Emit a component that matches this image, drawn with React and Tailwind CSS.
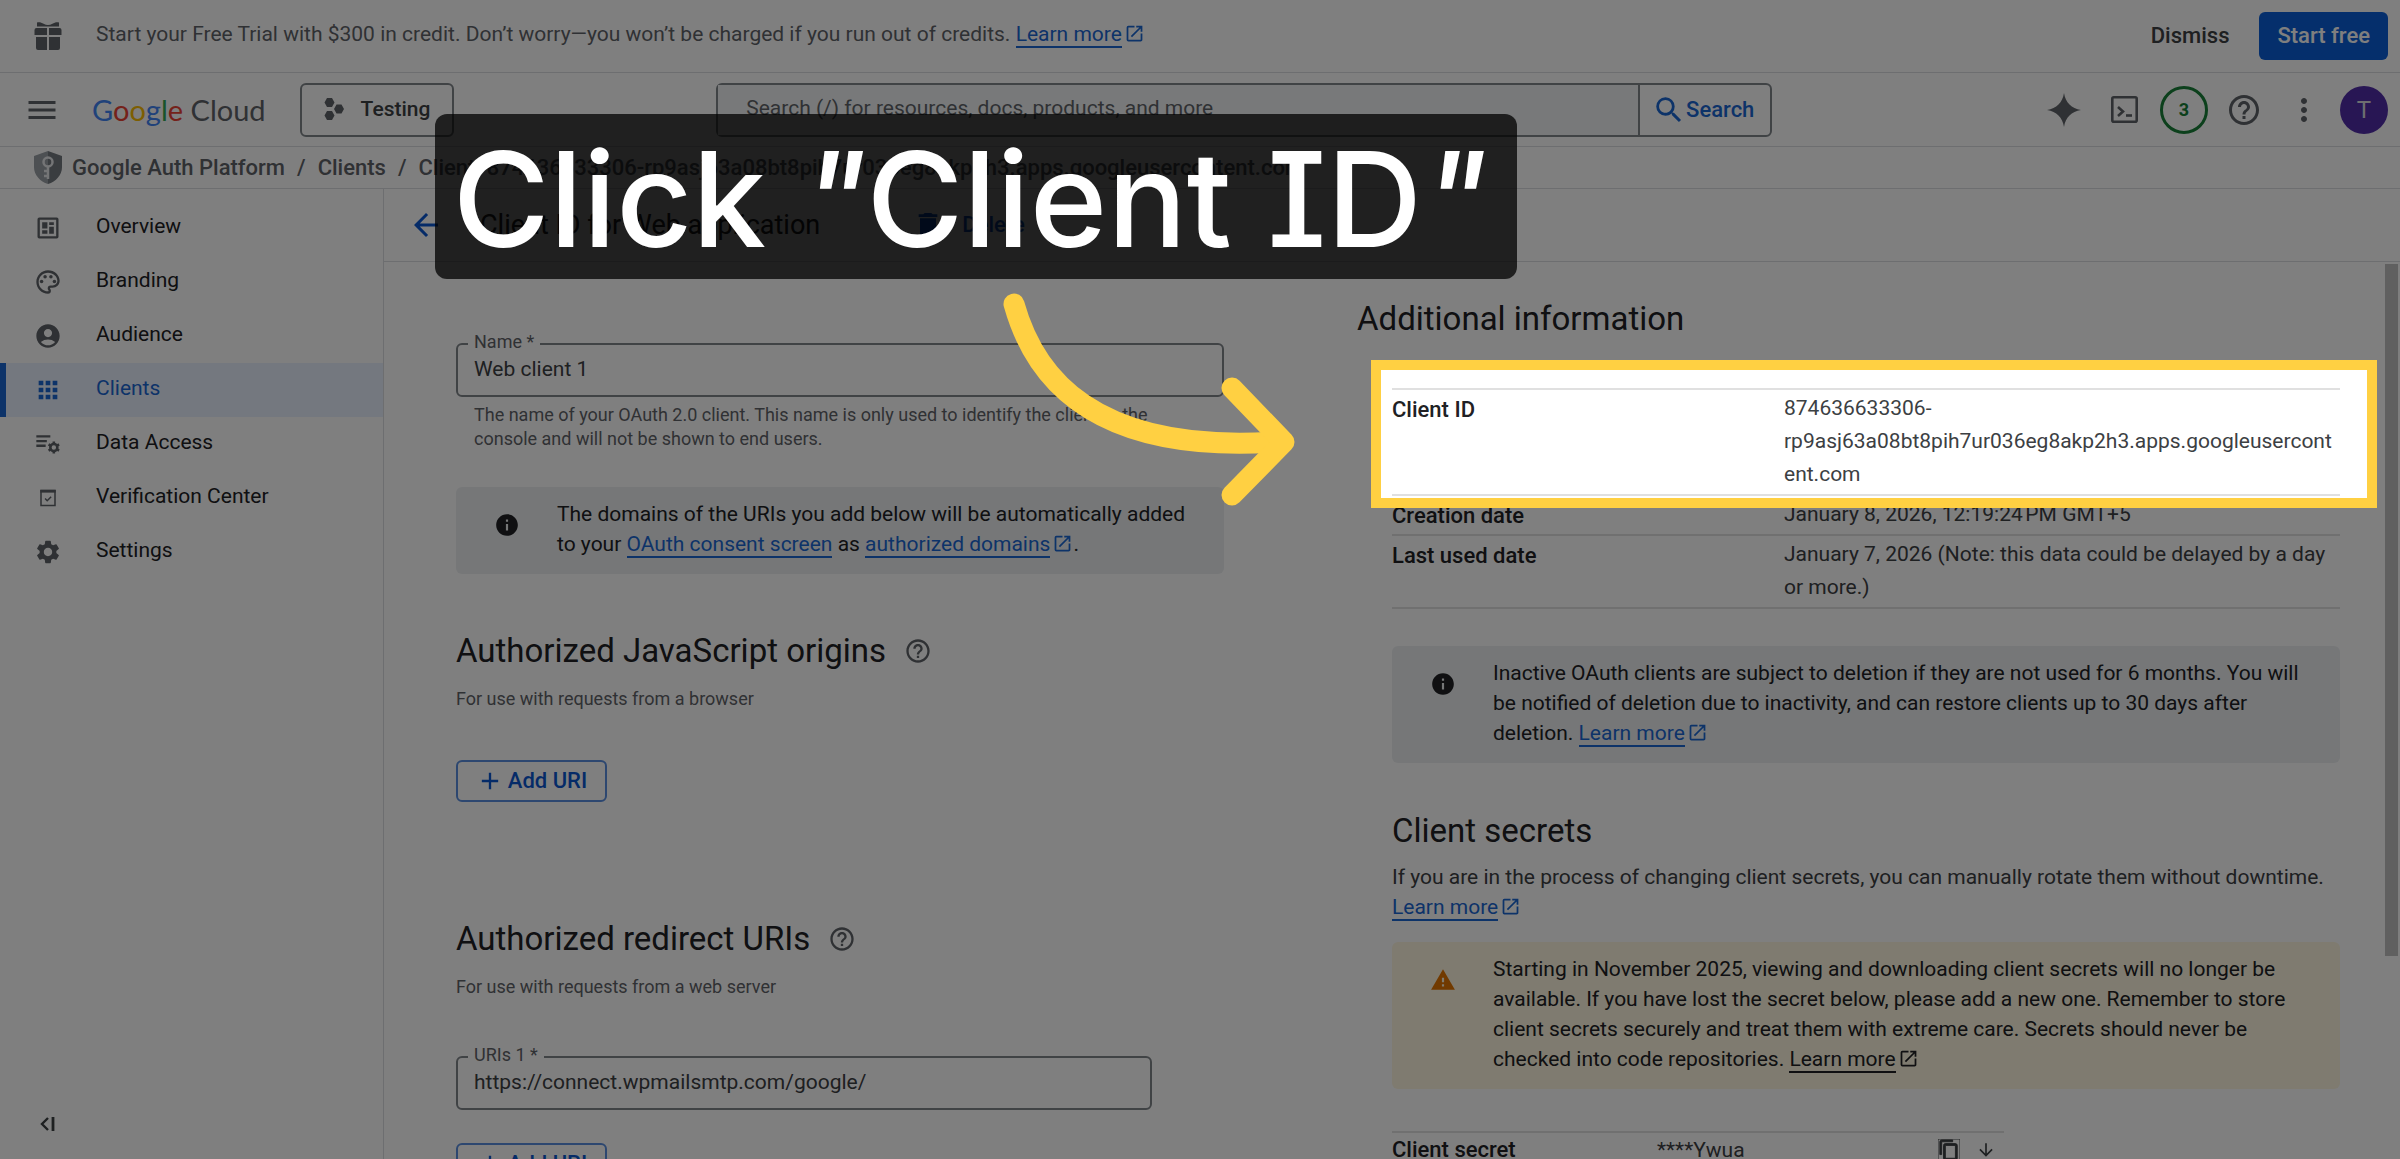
import {
  MdAccountCircle,
  MdAdd,
  MdApps,
  MdArrowBack,
  MdArrowDownward,
  MdContentCopy,
  MdDelete,
  MdHelpOutline,
  MdInfo,
  MdMenu,
  MdMoreVert,
  MdOpenInNew,
  MdOutlinePalette,
  MdSearch,
  MdSettings,
  MdWarning,
} from 'react-icons/md';

/* Icons that the Material set does not have */

function GiftIcon({ className }) {
  return (
    <svg viewBox="0 0 28 28" className={className} fill="currentColor" aria-hidden="true">
      <path d="M3 0.5c2-.8 4.600 0 6.600 1.200a9 9 0 0 0 8.800 0C20.400.5 23 -.3 25 .5v4H3z" />
      <path d="M2.500 6h10.500v7H0.500V8a2 2 0 0 1 2-2zM15 6h10.500a2 2 0 0 1 2 2v5H15zM2 15h11v13H4a2 2 0 0 1-2-2zM15 15h11v11a2 2 0 0 1-2 2h-9z" />
    </svg>
  );
}

function ProjectIcon({ className }) {
  return (
    <svg viewBox="0 0 20 22" className={className} fill="currentColor" aria-hidden="true">
      <path d="M3 0h5l2.500 4.500L8 9H3L.5 4.500zM3 13h5l2.500 4.500L8 22H3L.5 17.500zM12.500 6.500h5L20 11l-2.500 4.500h-5L10 11z" />
    </svg>
  );
}

function ShieldIcon({ className }) {
  return (
    <svg viewBox="0 0 28 33" className={className} aria-hidden="true">
      <path d="M14 0 0 5v11c0 8 6 14.500 14 17z" fill="#9aa0a6" />
      <path d="M14 0l14 5v11c0 8-6 14.500-14 17z" fill="#757a80" />
      <circle cx="14" cy="11" r="4.500" fill="none" stroke="#e8eaed" strokeWidth="2.500" />
      <path d="M14 15v13M14 20h-4M14 25h-4" stroke="#e8eaed" strokeWidth="2.500" fill="none" />
    </svg>
  );
}

function OverviewIcon({ className }) {
  return (
    <svg viewBox="0 0 24 24" className={className} fill="currentColor" aria-hidden="true">
      <path
        fillRule="evenodd"
        d="M4.500 3h15A1.500 1.500 0 0 1 21 4.500v15a1.500 1.500 0 0 1-1.500 1.500h-15A1.500 1.500 0 0 1 3 19.500v-15A1.500 1.500 0 0 1 4.500 3zM5 5v14h14V5z"
      />
      <path d="M7 7h4.500v5.500H7zM13 7h4v2.500h-4zM13 11h4v6h-4zM7 14h4.500v3H7z" />
    </svg>
  );
}

function DataAccessIcon({ className }) {
  return (
    <svg viewBox="0 0 24 24" className={className} fill="currentColor" aria-hidden="true">
      <path d="M2 4.500h12v2H2zM2 8.500h9v2H2zM2 12.500h8v2H2z" />
      <circle cx="17" cy="15" r="3" fill="none" stroke="currentColor" strokeWidth="2.200" />
      <path
        d="M17 9.800v2M17 18.200v2M12.500 12.400l1.700 1M19.800 16.600l1.700 1M12.500 17.600l1.700-1M19.800 13.400l1.700-1"
        stroke="currentColor"
        strokeWidth="2.200"
      />
    </svg>
  );
}

function VerificationIcon({ className }) {
  return (
    <svg viewBox="0 0 24 24" className={className} fill="none" stroke="currentColor" aria-hidden="true">
      <path d="M6 5.500h12v13H6z" strokeWidth="1.300" />
      <path d="M5.400 6.200h13.200" strokeWidth="2.400" />
      <path d="M9.500 12.500l1.800 1.800 3.400-3.400" strokeWidth="1.300" />
    </svg>
  );
}

function SparkIcon({ className }) {
  return (
    <svg viewBox="0 0 34 34" className={className} fill="currentColor" aria-hidden="true">
      <path d="M17 0c1.500 9.500 7.500 15.500 17 17-9.500 1.500-15.500 7.500-17 17C15.500 24.500 9.500 18.500 0 17 9.500 15.500 15.500 9.500 17 0z" />
    </svg>
  );
}

function ShellIcon({ className }) {
  return (
    <svg viewBox="0 0 27 27" className={className} fill="none" stroke="currentColor" aria-hidden="true">
      <rect x="1.300" y="1.300" width="24.400" height="24.400" rx="1.500" strokeWidth="2.600" />
      <path d="M7 11l5 4.500-5 4.500" strokeWidth="2.600" />
      <path d="M15 19.500h6" strokeWidth="2.600" />
    </svg>
  );
}

function CollapseIcon({ className }) {
  return (
    <svg viewBox="0 0 15 14" className={className} fill="none" stroke="currentColor" strokeWidth="2.400" aria-hidden="true">
      <path d="M8 1 2 7l6 6" />
      <path d="M13 0v14" strokeWidth="2.800" />
    </svg>
  );
}

const navItems = [
  { label: 'Overview', icon: OverviewIcon },
  { label: 'Branding', icon: MdOutlinePalette },
  { label: 'Audience', icon: MdAccountCircle },
  { label: 'Clients', icon: MdApps, active: true },
  { label: 'Data Access', icon: DataAccessIcon },
  { label: 'Verification Center', icon: VerificationIcon },
  { label: 'Settings', icon: MdSettings },
];

const clientInfo = [
  { label: 'Client ID', value: '874636633306-rp9asj63a08bt8pih7ur036eg8akp2h3.apps.googleusercontent.com' },
  { label: 'Creation date', value: 'January 8, 2026, 12:19:24\u202fPM GMT+5' },
  { label: 'Last used date', value: 'January 7, 2026 (Note: this data could be delayed by a day or more.)' },
];

function TextLink({ children, external, className = 'text-[#1a67d2]' }) {
  return (
    <a href="#" className={`whitespace-nowrap ${className}`}>
      <span className="border-b-2 border-current">{children}</span>
      {external && <MdOpenInNew className="ml-0.5 inline size-[21px] align-[-3px]" />}
    </a>
  );
}

function TopBanner() {
  return (
    <div className="flex h-[73px] shrink-0 items-center border-b border-[#dadce0] pl-[34px] pr-3">
      <GiftIcon className="size-7 text-[#5f6368]" />
      <p className="ml-[34px] flex-1 pb-1 text-[#5f6368]">
        Start your Free Trial with $300 in credit. Don’t worry—you won’t be charged if you run out of credits.{' '}
        <TextLink external>Learn more</TextLink>
      </p>
      <button className="px-[30px] text-[22px] font-medium text-[#3c4043]">Dismiss</button>
      <button className="h-12 rounded-md bg-[#0b5fd8] px-[18px] text-[22px] font-medium text-white">Start free</button>
    </div>
  );
}

function GoogleCloudLogo() {
  return (
    <a href="#" className="ml-8 font-['Lato'] text-[29px] text-[#5f6368]" aria-label="Google Cloud">
      <span className="text-[#4285f4]">G</span>
      <span className="text-[#ea4335]">o</span>
      <span className="text-[#fbbc04]">o</span>
      <span className="text-[#4285f4]">g</span>
      <span className="text-[#34a853]">l</span>
      <span className="text-[#ea4335]">e</span> Cloud
    </a>
  );
}

function Header() {
  return (
    <header className="flex h-[74px] shrink-0 items-center justify-between border-b border-[#dadce0] pl-6 pr-[6px]">
      <div className="flex items-center">
        <button aria-label="Main menu" className="text-[#5f6368]">
          <MdMenu className="size-9" />
        </button>
        <GoogleCloudLogo />
        <button className="ml-[34px] flex h-[54px] items-center gap-[17px] rounded-md border-2 border-[#80868b] px-[22px] pb-0.5 font-medium text-[#3c4043]">
          <ProjectIcon className="h-[22px] w-5 text-[#5f6368]" />
          Testing
        </button>
      </div>
      <form className="flex h-[54px] w-[1056px] rounded-md border-2 border-[#80868b]">
        <input
          type="search"
          aria-label="Search"
          placeholder="Search (/) for resources, docs, products, and more"
          className="min-w-0 flex-1 bg-[#f1f3f4] px-7 pb-1 placeholder-[#5f6368]"
        />
        <button type="button" className="flex w-[132px] items-center justify-center border-l-2 border-[#80868b] pr-1 text-[22px] font-medium text-[#1a67d2]">
          <MdSearch className="size-[34px]" />
          Search
        </button>
      </form>
      <div className="flex items-center text-[#5f6368]">
        <button aria-label="Gemini" className="flex w-[60px] justify-center">
          <SparkIcon className="size-[34px]" />
        </button>
        <button aria-label="Cloud Shell" className="flex w-[60px] justify-center">
          <ShellIcon className="size-[27px]" />
        </button>
        <button aria-label="Notifications" className="flex w-[60px] justify-center">
          <span className="flex size-12 items-center justify-center rounded-full border-[3px] border-[#188038] text-lg font-bold text-[#188038]">3</span>
        </button>
        <button aria-label="Help" className="flex w-[60px] justify-center">
          <MdHelpOutline className="size-9" />
        </button>
        <button aria-label="More options" className="flex w-[60px] justify-center">
          <MdMoreVert className="size-9" />
        </button>
        <button aria-label="Account" className="flex w-[60px] justify-center">
          <span className="flex size-12 items-center justify-center rounded-full bg-[#512da8] text-2xl text-[#dadce0]">T</span>
        </button>
      </div>
    </header>
  );
}

function Breadcrumbs() {
  return (
    <nav aria-label="Breadcrumb" className="flex h-[42px] shrink-0 items-center border-b border-[#dadce0] pl-[34px] text-[22px] font-medium text-[#5f6368]">
      <ShieldIcon className="mr-[10px] h-[33px] w-7" />
      <a href="#">Google Auth Platform</a>
      <span className="mx-3">/</span>
      <a href="#">Clients</a>
      <span className="mx-3">/</span>
      <span>Client: 874636633306-rp9asj63a08bt8pih7ur036eg8akp2h3.apps.googleusercontent.com</span>
    </nav>
  );
}

function Sidebar() {
  return (
    <aside className="flex w-[384px] shrink-0 flex-col justify-between border-r border-[#dadce0] pt-3 pb-7">
      <nav aria-label="Google Auth Platform">
        {navItems.map(({ label, icon: Icon, active }) => (
          <a
            key={label}
            href="#"
            className={`flex h-[54px] items-center gap-[34px] border-l-[6px] pl-7 ${
              active ? 'border-[#1a67d2] bg-[#e8f0fe] text-[#1a67d2]' : 'border-transparent text-[#202124]'
            }`}
          >
            <Icon className={`size-7 ${active ? '' : 'text-[#5f6368]'}`} />
            <span className="pb-1">{label}</span>
          </a>
        ))}
      </nav>
      <button aria-label="Collapse menu" className="ml-10 w-[15px] text-[#3c4043]">
        <CollapseIcon className="h-[14px] w-[15px]" />
      </button>
    </aside>
  );
}

function PageTitle() {
  return (
    <div className="flex h-[73px] items-center border-b border-[#dadce0] pl-6">
      <button aria-label="Back" className="text-[#0b57d0]">
        <MdArrowBack className="size-9" />
      </button>
      <h1 className="ml-9 text-[27px] text-[#202124]">Client ID for Web application</h1>
      <button className="ml-[92px] flex items-center gap-[18px] text-[22px] font-medium text-[#0b57d0]">
        <MdDelete className="size-8" />
        Delete
      </button>
    </div>
  );
}

function TextField({ id, label, value, className = '' }) {
  return (
    <div className={`relative ${className}`}>
      <label htmlFor={id} className="absolute -top-[13px] left-3 bg-white px-[6px] text-lg leading-6 text-[#5f6368]">
        {label}
      </label>
      <input id={id} defaultValue={value} className="h-[54px] w-full rounded-md border-2 border-[#80868b] px-4 pb-[3px] text-[#3c4043]" />
    </div>
  );
}

function Notice({ warning, className = '', children }) {
  return (
    <div className={`flex rounded-md pt-3 pb-[15px] pl-[38px] pr-6 text-[#202124] ${warning ? 'bg-[#fef7e0]' : 'bg-[#eceff1]'} ${className}`}>
      {warning ? (
        <MdWarning className="mt-[13px] mr-[37px] size-[26px] shrink-0 text-[#e37400]" />
      ) : (
        <MdInfo className="mt-[13px] mr-[37px] size-[26px] shrink-0" />
      )}
      <p>{children}</p>
    </div>
  );
}

function SectionTitle({ children, help }) {
  return (
    <h2 className="flex items-center gap-[18px] text-[33px] leading-[48px] text-[#202124]">
      {children}
      {help && <MdHelpOutline className="size-7 text-[#5f6368]" />}
    </h2>
  );
}

function AddUriButton({ className = '' }) {
  return (
    <button className={`flex h-[42px] w-[151px] items-center justify-center gap-1 rounded-md border-2 border-[#5a8fe0] text-[22px] font-medium text-[#0b57d0] ${className}`}>
      <MdAdd className="size-7" />
      Add URI
    </button>
  );
}

function ClientForm() {
  return (
    <section className="max-w-[768px] pt-[81px]">
      <TextField id="name" label="Name *" value="Web client 1" />
      <p className="mt-[6px] px-[18px] text-lg leading-6 text-[#5f6368]">
        The name of your OAuth 2.0 client. This name is only used to identify the client in the console and will not be
        shown to end users.
      </p>

      <Notice className="mt-9">
        The domains of the URIs you add below will be automatically added to your{' '}
        <TextLink>OAuth consent screen</TextLink> as <TextLink external>authorized domains</TextLink>.
      </Notice>

      <div className="mt-[53px]">
        <SectionTitle help>Authorized JavaScript origins</SectionTitle>
        <p className="mt-3 text-lg leading-6 text-[#5f6368]">For use with requests from a browser</p>
        <AddUriButton className="mt-[49px]" />
      </div>

      <div className="mt-[113px]">
        <SectionTitle help>Authorized redirect URIs</SectionTitle>
        <p className="mt-3 text-lg leading-6 text-[#5f6368]">For use with requests from a web server</p>
        <TextField id="uri-1" label="URIs 1 *" value="https://connect.wpmailsmtp.com/google/" className="mt-[57px] mr-18" />
        <AddUriButton className="mt-[33px]" />
      </div>
    </section>
  );
}

function ClientDetails() {
  return (
    <section className="pt-[33px]">
      <SectionTitle>Additional information</SectionTitle>

      <div className="pl-[35px]">
        <div className="relative mt-[45px]">
          <table className="w-full table-fixed border-t-2 border-[#e0e0e0] text-left text-[#3c4043]">
            <tbody>
              {clientInfo.map(({ label, value }) => (
                <tr key={label} className="border-b-2 border-[#e0e0e0] align-top">
                  <th scope="row" className="w-[392px] pt-[3px] text-[22px] font-medium leading-[33px] text-[#202124]">{label}</th>
                  <td className="break-words pt-0.5 pb-[3px] leading-[33px]">{value}</td>
                </tr>
              ))}
            </tbody>
          </table>
          {/* Spotlight on the Client ID row, its shadow dims the rest of the page */}
          <div className="pointer-events-none absolute -top-[28px] -left-[21px] -right-[37px] z-10 h-[148px] border-[10px] border-[#ffd042] shadow-[0_0_0_3000px_rgba(0,0,0,0.5)]" />
        </div>

        <Notice className="mt-[37px]">
          Inactive OAuth clients are subject to deletion if they are not used for 6 months. You will be notified of
          deletion due to inactivity, and can restore clients up to 30 days after deletion.{' '}
          <TextLink external>Learn more</TextLink>
        </Notice>

        <div className="mt-11">
          <SectionTitle>Client secrets</SectionTitle>
          <p className="mt-[7px] text-[#3c4043]">
            If you are in the process of changing client secrets, you can manually rotate them without downtime.{' '}
            <TextLink external>Learn more</TextLink>
          </p>
        </div>

        <Notice warning className="mt-5">
          Starting in November 2025, viewing and downloading client secrets will no longer be available. If you have
          lost the secret below, please add a new one. Remember to store client secrets securely and treat them with
          extreme care. Secrets should never be checked into code repositories.{' '}
          <TextLink external className="text-[#202124]">Learn more</TextLink>
        </Notice>

        <div className="mt-[42px] flex h-9 w-[612px] items-center border-t-2 border-[#e0e0e0] text-[#3c4043]">
          <span className="w-[265px] text-[22px] font-medium text-[#202124]">Client secret</span>
          <span className="flex-1">****Ywua</span>
          <button aria-label="Copy client secret" className="mr-4">
            <MdContentCopy className="size-[22px]" strokeWidth="1" />
          </button>
          <button aria-label="Download client secret" className="mr-2">
            <MdArrowDownward className="size-5" />
          </button>
        </div>
      </div>
    </section>
  );
}

function Callout() {
  return (
    <>
      <div className="absolute left-[435px] top-[114px] z-20 flex h-[165px] w-[1082px] items-center justify-center whitespace-nowrap rounded-xl bg-black/75 pt-1 pr-3 font-['Inter'] text-[132px] font-medium leading-none text-white">
        <p>
          Click <i>"</i>Client <span className="[font-feature-settings:'cv08','ss02']">I</span>D<i>"</i>
        </p>
      </div>
      <svg
        viewBox="0 0 300 220"
        className="absolute left-[1000px] top-[290px] z-20 h-[220px] w-[300px]"
        fill="none"
        stroke="#ffd042"
        strokeWidth="21"
        strokeLinecap="round"
        strokeLinejoin="round"
        aria-hidden="true"
      >
        <path d="M14 14C34 86 92 164 276 152" />
        <path d="M232 98l52 54-52 53" />
      </svg>
    </>
  );
}

export default function App() {
  return (
    <div className="relative flex h-screen flex-col overflow-hidden bg-white font-['Roboto',sans-serif] text-[21px] leading-[30px]">
      <TopBanner />
      <Header />
      <Breadcrumbs />
      <div className="flex min-h-0 flex-1">
        <Sidebar />
        <main className="min-w-0 flex-1">
          <PageTitle />
          <div className="flex justify-between">
            <div className="grid flex-1 grid-cols-[minmax(0,901fr)_minmax(0,983fr)] pl-[72px] pr-[45px]">
              <ClientForm />
              <ClientDetails />
            </div>
            {/* Scrollbar */}
            <div className="mt-[2px] mr-[2px] h-[692px] w-[13px] bg-[#c1c1c1]" />
          </div>
        </main>
      </div>
      <Callout />
    </div>
  );
}
